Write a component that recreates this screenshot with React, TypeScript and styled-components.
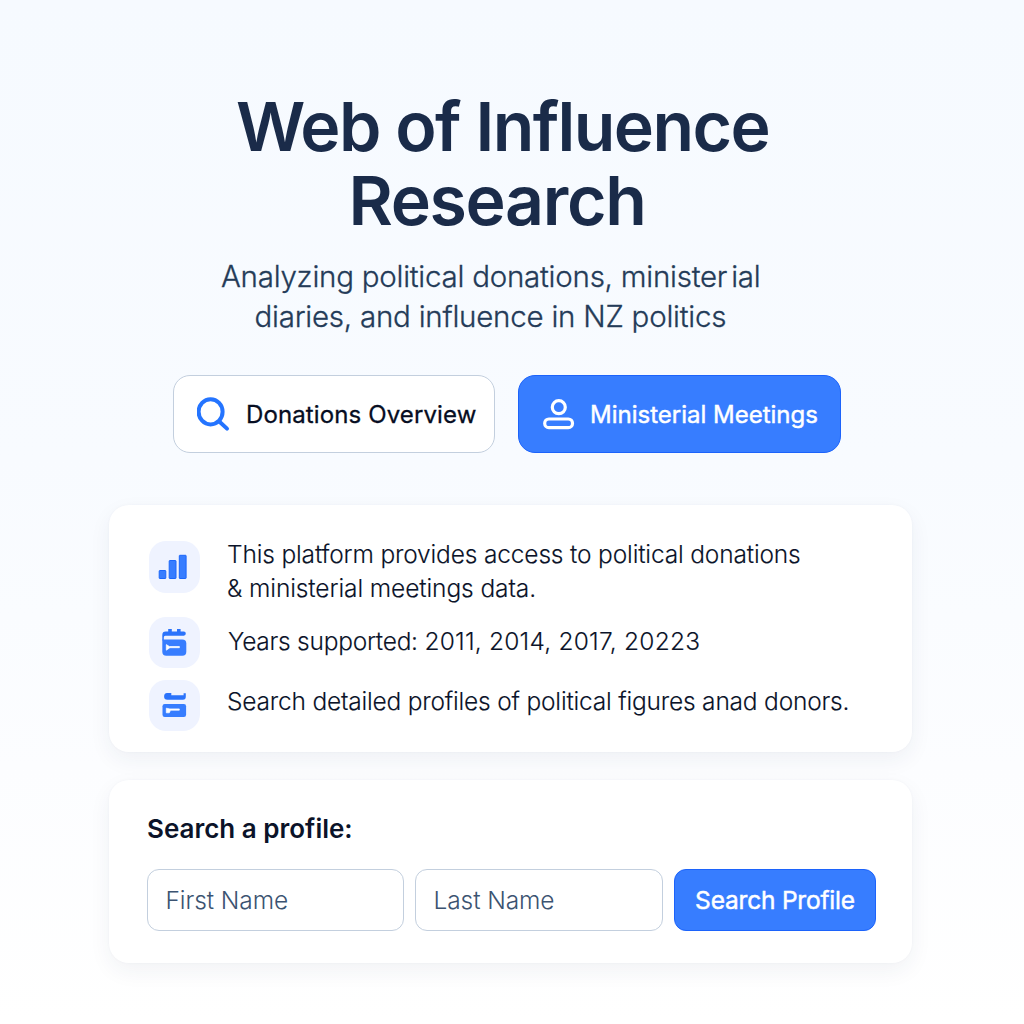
import React from "react";
import styled, { createGlobalStyle } from "styled-components";

const GlobalStyle = createGlobalStyle`
  *, *::before, *::after { box-sizing: border-box; }
  html, body { margin: 0; padding: 0; }
  body {
    font-family: Inter, "Liberation Sans", sans-serif;
    color: #0b1329;
    background: #fdfdff;
  }
  h1, h2, p, ul { margin: 0; padding: 0; }
`;

const Page = styled.main`
  width: 1024px;
  height: 1024px;
  overflow: hidden;
  padding: 90px 112px 0 109px;
  background: linear-gradient(180deg, #f6faff 0%, #f8fbff 45%, #fcfdff 75%, #ffffff 100%);
`;

const Line = styled.span<{ $indent?: number; $tracking?: number }>`
  display: block;
  white-space: nowrap;
  padding-left: ${(p) => p.$indent ?? 0}px;
  letter-spacing: ${(p) => p.$tracking ?? 0}px;
`;

const Title = styled.h1`
  font-size: 68px;
  line-height: 73.5px;
  font-weight: 600;
  color: #1a2b49;
`;

const Subtitle = styled.p`
  margin-top: 19px;
  font-size: 29.5px;
  line-height: 40px;
  font-weight: 300;
  color: #243b58;
  -webkit-text-stroke: 0.3px currentColor;
`;

const Split = styled.span`
  margin-left: 4px;
`;

const Years = styled.span`
  letter-spacing: 0.22px;
`;

const Actions = styled.div`
  display: flex;
  gap: 23px;
  margin: 39px 0 0 64px;
`;

const ActionButton = styled.button<{ $primary?: boolean; $tracking: number }>`
  display: flex;
  align-items: center;
  width: ${(p) => (p.$primary ? 323 : 322)}px;
  height: 78px;
  padding: 0 0 0 ${(p) => (p.$primary ? 24 : 23)}px;
  gap: 15px;
  border: 1.5px solid ${(p) => (p.$primary ? "#1c63fb" : "#c3cfde")};
  border-radius: 17px;
  background: ${(p) => (p.$primary ? "#377dff" : "#ffffff")};
  color: ${(p) => (p.$primary ? "#ffffff" : "#060d22")};
  font-family: inherit;
  font-size: 24px;
  font-weight: 400;
  -webkit-text-stroke: ${(p) => (p.$primary ? 0.45 : 0.3)}px currentColor;
  letter-spacing: ${(p) => p.$tracking}px;
  white-space: nowrap;
`;

const Card = styled.section`
  width: 803px;
  border-radius: 20px;
  background: #ffffff;
  box-shadow: 0 8px 22px rgba(30, 50, 90, 0.06), 0 0 3px rgba(30, 50, 90, 0.035);
`;

const InfoCard = styled(Card)`
  height: 247px;
  margin-top: 52px;
  padding: 36px 0 0 40px;
`;

const FeatureList = styled.ul`
  list-style: none;
  display: flex;
  flex-direction: column;
`;

const Feature = styled.li<{ $gap?: number }>`
  display: flex;
  align-items: flex-start;
  gap: 27px;
  margin-top: ${(p) => p.$gap ?? 0}px;
`;

const IconTile = styled.span<{ $height?: number }>`
  flex: none;
  display: flex;
  width: 51px;
  height: ${(p) => p.$height ?? 51}px;
  border-radius: 17px;
  background: #eff3ff;
`;

const FeatureText = styled.p<{ $top: number }>`
  margin-top: ${(p) => p.$top}px;
  font-size: 24.5px;
  line-height: 34px;
  font-weight: 300;
  -webkit-text-stroke: 0.12px currentColor;
  color: #0b1329;
`;

const SearchCard = styled(Card)`
  height: 183px;
  margin-top: 28px;
  padding: 32px 0 0 38px;
`;

const SearchTitle = styled.h2`
  font-size: 26px;
  line-height: 34px;
  font-weight: 600;
  color: #0b1329;
`;

const Form = styled.form`
  display: flex;
  gap: 11px;
  margin-top: 23px;
`;

const Field = styled.input<{ $width: number; $tracking: number }>`
  width: ${(p) => p.$width}px;
  height: 62px;
  padding: 0 17.5px;
  border: 1.5px solid #c3cfde;
  border-radius: 12px;
  background: #ffffff;
  font-family: inherit;
  font-size: 24.5px;
  font-weight: 300;
  letter-spacing: ${(p) => p.$tracking}px;
  outline: none;
  &::placeholder { color: #3b5371; opacity: 1; }
`;

const Submit = styled.button`
  width: 202px;
  height: 62px;
  padding: 0;
  border: 1.5px solid #1c63fb;
  border-radius: 12px;
  background: #377dff;
  color: #ffffff;
  font-family: inherit;
  font-size: 24.5px;
  font-weight: 400;
  -webkit-text-stroke: 0.45px currentColor;
  letter-spacing: -0.2px;
  white-space: nowrap;
`;

const SearchIcon = () => (
  <svg width="34" height="36" viewBox="0 0 34 36" fill="none" stroke="#2474ff" strokeWidth="4" strokeLinecap="round">
    <ellipse cx="13.6" cy="15.8" rx="12" ry="12.6" />
    <path d="M22.8 26 L30 32.6" />
  </svg>
);

const PersonIcon = () => (
  <svg width="32" height="34" viewBox="0 0 32 34" fill="none" stroke="#ffffff" strokeWidth="3.2">
    <circle cx="15.8" cy="10.2" r="6.5" />
    <rect x="1.7" y="22" width="27.8" height="8.6" rx="4.2" />
  </svg>
);

const BarsIcon = () => (
  <svg width="51" height="52" viewBox="0 0 51 52" fill="#377dff" stroke="#1c67fa" strokeWidth="1">
    <rect x="10.2" y="29.5" width="6.6" height="8" rx=".5" />
    <rect x="20.2" y="19.5" width="6.8" height="18" rx=".5" />
    <rect x="30.3" y="14.3" width="6.8" height="23.2" rx=".5" />
  </svg>
);

const CalendarIcon = () => (
  <svg width="51" height="51" viewBox="0 0 51 51">
    <path d="M19.2 12h3.6v2.6h5.2V12h3.6v2.6h3.2q2 0 2 2t-2 2.2H16.2q-1.4 0-1.4 1.6V23.5h-1.5V18q0-3.4 3.4-3.4h2.5z" fill="#2b73fb" />
    <path d="M13.3 22.5h20q4 0 4 4v8.2q0 4-4 4H17.3q-4 0-4-4z" fill="#377dff" />
    <path d="M17.3 27.6v5.6l3.6-2.5h9.5v-1.2h-10z" fill="#fff" stroke="#fff" strokeWidth=".7" strokeLinejoin="round" />
  </svg>
);

const ArchiveIcon = () => (
  <svg width="51" height="51" viewBox="0 0 51 51">
    <path d="M18 13h4.3v2.3H34.6V13.3h2.2v3.5q0 2.9-2.9 2.9H18.4q-3.3 0-3.3-3.2 0-3.5 2.9-3.5z" fill="#2b73fb" />
    <rect x="13.5" y="24" width="23.6" height="13" rx="2.2" fill="#377dff" />
    <path d="M17.3 28.2v4.6h3l1.2-2.6h8.8v-1.3h-9.4z" fill="#fff" stroke="#fff" strokeWidth=".7" strokeLinejoin="round" />
  </svg>
);

export default function App() {
  return (
    <>
      <GlobalStyle />
      <Page>
        <Title>
          <Line $indent={127} $tracking={-1.6}>Web of Influence</Line>
          <Line $indent={239.5} $tracking={-1.35}>Research</Line>
        </Title>
        <Subtitle>
          <Line $indent={112} $tracking={-0.24}>
            Analyzing political donations, minister<Split>ial</Split>
          </Line>
          <Line $indent={145.5} $tracking={-0.23}>diaries, and influence in NZ politics</Line>
        </Subtitle>
        <Actions>
          <ActionButton $tracking={0.12}>
            <SearchIcon />
            Donations Overview
          </ActionButton>
          <ActionButton $primary $tracking={0}>
            <PersonIcon />
            Ministerial Meetings
          </ActionButton>
        </Actions>
        <InfoCard>
          <FeatureList>
            <Feature>
              <IconTile $height={52}><BarsIcon /></IconTile>
              <FeatureText $top={-4}>
                <Line $tracking={-0.16}>This platform provides access to political donations</Line>
                <Line $tracking={-0.1}>&amp; ministerial meetings data.</Line>
              </FeatureText>
            </Feature>
            <Feature $gap={12}>
              <IconTile><CalendarIcon /></IconTile>
              <FeatureText $top={7}>
                <Line $indent={1} $tracking={-0.26}>
                  Years supported: <Years>2011, 2014, 2017, 20223</Years>
                </Line>
              </FeatureText>
            </Feature>
            <Feature $gap={12}>
              <IconTile><ArchiveIcon /></IconTile>
              <FeatureText $top={4}>
                <Line $tracking={-0.2}>Search detailed profiles of political figures anad donors.</Line>
              </FeatureText>
            </Feature>
          </FeatureList>
        </InfoCard>
        <SearchCard>
          <SearchTitle><Line>Search a profile:</Line></SearchTitle>
          <Form onSubmit={(e) => e.preventDefault()}>
            <Field $width={257} $tracking={-0.08} placeholder="First Name" aria-label="First Name" />
            <Field $width={248} $tracking={-0.1} placeholder="Last Name" aria-label="Last Name" />
            <Submit type="submit">Search Profile</Submit>
          </Form>
        </SearchCard>
      </Page>
    </>
  );
}
